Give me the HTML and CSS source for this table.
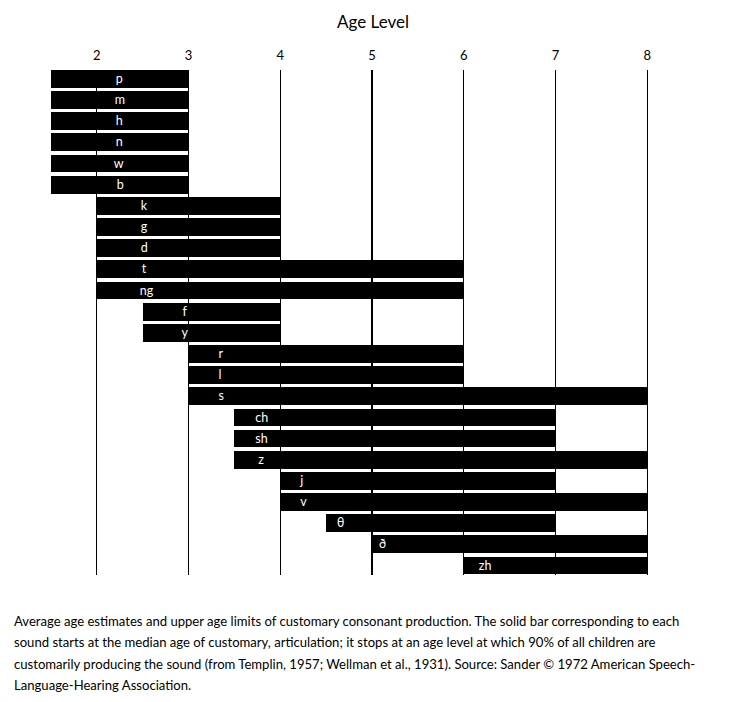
FILE: index.html
```html
<!DOCTYPE html>
<html>
<head>
<meta charset="utf-8">
<link rel="stylesheet" href="styles.css">
</head>
<body>
<div class="figure">
  <div class="title">Age Level</div>
  <div class="axis">
    <span class="tick">2</span><span class="tick">3</span><span class="tick">4</span><span class="tick">5</span><span class="tick">6</span><span class="tick">7</span><span class="tick">8</span>
  </div>
  <div class="plot">
    <div class="grid" style="left:45.9px"></div>
    <div class="grid" style="left:137.6px"></div>
    <div class="grid" style="left:229.4px"></div>
    <div class="grid" style="left:321.2px"></div>
    <div class="grid" style="left:413px"></div>
    <div class="grid" style="left:504.7px"></div>
    <div class="grid" style="left:596.5px"></div>

    <div class="row"><div class="bar" style="margin-left:0px;width:137.6px;padding-left:65px">p</div></div>
    <div class="row"><div class="bar" style="margin-left:0px;width:137.6px;padding-left:64px">m</div></div>
    <div class="row"><div class="bar" style="margin-left:0px;width:137.6px;padding-left:65px">h</div></div>
    <div class="row"><div class="bar" style="margin-left:0px;width:137.6px;padding-left:65px">n</div></div>
    <div class="row"><div class="bar" style="margin-left:0px;width:137.6px;padding-left:63px">w</div></div>
    <div class="row"><div class="bar" style="margin-left:0px;width:137.6px;padding-left:66px">b</div></div>
    <div class="row"><div class="bar" style="margin-left:45.9px;width:183.5px;padding-left:44px">k</div></div>
    <div class="row"><div class="bar" style="margin-left:45.9px;width:183.5px;padding-left:44px">g</div></div>
    <div class="row"><div class="bar" style="margin-left:45.9px;width:183.5px;padding-left:44px">d</div></div>
    <div class="row"><div class="bar" style="margin-left:45.9px;width:367.1px;padding-left:45px">t</div></div>
    <div class="row"><div class="bar" style="margin-left:45.9px;width:367.1px;padding-left:43px">ng</div></div>
    <div class="row"><div class="bar" style="margin-left:91.8px;width:137.6px;padding-left:40px">f</div></div>
    <div class="row"><div class="bar" style="margin-left:91.8px;width:137.6px;padding-left:39px">y</div></div>
    <div class="row"><div class="bar" style="margin-left:137.6px;width:275.3px;padding-left:30px">r</div></div>
    <div class="row"><div class="bar" style="margin-left:137.6px;width:275.3px;padding-left:30px">l</div></div>
    <div class="row"><div class="bar" style="margin-left:137.6px;width:458.9px;padding-left:30px">s</div></div>
    <div class="row"><div class="bar" style="margin-left:183.5px;width:321.2px;padding-left:21px">ch</div></div>
    <div class="row"><div class="bar" style="margin-left:183.5px;width:321.2px;padding-left:21px">sh</div></div>
    <div class="row"><div class="bar" style="margin-left:183.5px;width:413px;padding-left:24px">z</div></div>
    <div class="row"><div class="bar" style="margin-left:229.4px;width:275.3px;padding-left:20px">j</div></div>
    <div class="row"><div class="bar" style="margin-left:229.4px;width:367.1px;padding-left:20px">v</div></div>
    <div class="row"><div class="bar" style="margin-left:275.3px;width:229.4px;padding-left:11px"><span class="theta">θ</span></div></div>
    <div class="row"><div class="bar" style="margin-left:321.2px;width:275.3px;padding-left:7px">ð</div></div>
    <div class="row"><div class="bar" style="margin-left:413px;width:183.5px;padding-left:15px">zh</div></div>
  </div>
  <p class="caption"><span class="line">Average age estimates and upper age limits of customary consonant production. The solid bar corresponding to each</span><span class="line">sound starts at the median age of customary, articulation; it stops at an age level at which 90% of all children are</span><span class="line">customarily producing the sound (from Templin, 1957; Wellman et al., 1931). Source: Sander © 1972 American Speech-</span><span class="line">Language-Hearing Association.</span></p>
</div>
</body>
</html>
```

FILE: styles.css
```css
html, body {
  margin: 0;
  padding: 0;
  background: #fff;
}
body {
  font-family: Lato, "Liberation Sans", sans-serif;
  color: #000;
  width: 748px;
}
.title {
  text-align: center;
  font-size: 17px;
  line-height: 20px;
  padding-top: 12px;
  width: 746px;
}
.axis {
  display: flex;
  margin-top: 16px;
  margin-left: 50.8px;
  font-size: 13px;
  line-height: 15px;
}
.tick {
  width: 91.77px;
  text-align: center;
  flex: none;
}
.plot {
  position: relative;
  margin-top: 7px;
  margin-left: 50.8px;
  width: 596.5px;
}
.grid {
  position: absolute;
  top: 0;
  width: 1.3px;
  margin-left: -0.65px;
  height: 505px;
  background: #000;
}
.row {
  height: 21.17px;
}
.bar {
  position: relative;
  box-sizing: border-box;
  height: 17.8px;
  line-height: 17.8px;
  background: #000;
  color: #fff;
  font-size: 12.5px;
  white-space: nowrap;
}
.theta {
  font-family: "DejaVu Sans", sans-serif;
  font-size: 12px;
}
.caption {
  margin: 33px 0 0 14px;
  font-size: 13.1px;
  line-height: 21.4px;
}
.line {
  display: block;
  white-space: nowrap;
}
```
